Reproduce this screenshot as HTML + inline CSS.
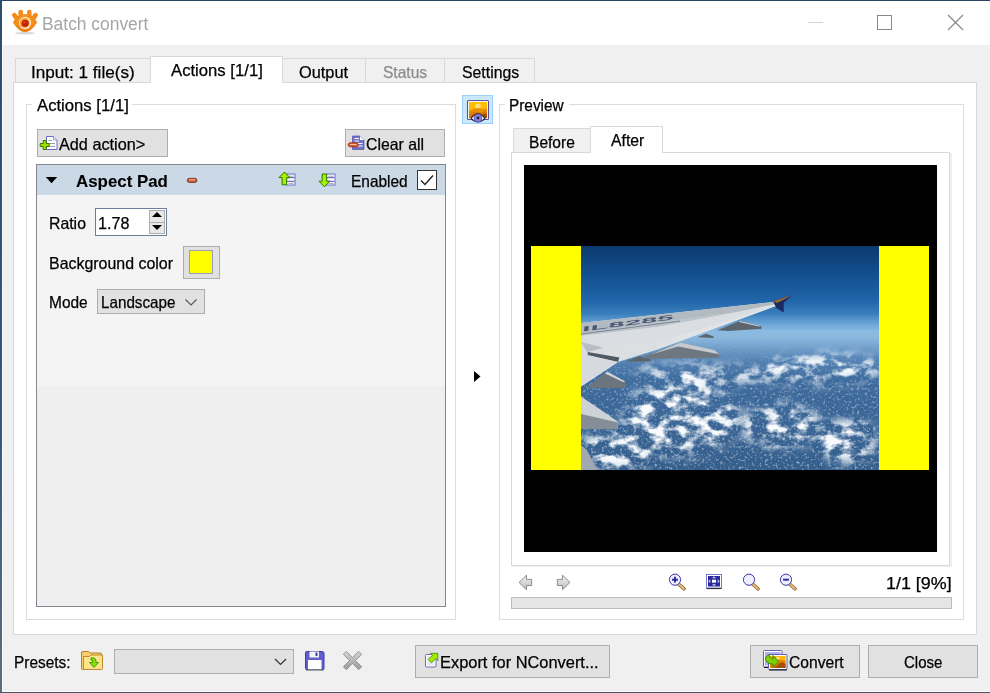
<!DOCTYPE html>
<html><head><meta charset="utf-8">
<style>
*{margin:0;padding:0;box-sizing:border-box}
html,body{width:990px;height:693px;overflow:hidden;background:#f0f0f0;font-family:"Liberation Sans",sans-serif;font-size:16px;color:#000}
.a{position:absolute}
.t{position:absolute;white-space:pre;line-height:1;transform-origin:0 0;-webkit-text-stroke:0.25px currentColor}
.btn{position:absolute;background:#e1e1e1;border:1px solid #adadad}
.tab{position:absolute;background:#f0f0f0;border:1px solid #d9d9d9;border-bottom:none}
.tabon{position:absolute;background:#fff;border:1px solid #d9d9d9;border-bottom:none}
.box{position:absolute;border:1px solid #dcdcdc}
</style></head><body>
<!-- window frame -->
<div class="a" style="left:0;top:0;width:990px;height:693px;background:#f0f0f0"></div>
<div class="a" style="left:0;top:0;width:990px;height:45px;background:#fff"></div>
<div class="a" style="left:0;top:0;width:990px;height:1px;background:#2a4560"></div>
<div class="a" style="left:0;top:0;width:2px;height:693px;background:linear-gradient(#2d4d6c,#34597c 60%,#5a6e80)"></div>
<div class="a" style="left:2px;top:45px;width:1px;height:647px;background:#fafafa"></div>
<div class="a" style="left:2px;top:691px;width:988px;height:1px;background:#fafafa"></div>
<div class="a" style="left:0;top:692px;width:990px;height:1px;background:#4a5664"></div>

<!-- title -->
<div class="a" style="left:808px;top:22px;width:15px;height:1px;background:#d4d4d4"></div>
<div class="a" style="left:877px;top:15px;width:15px;height:15px;border:1px solid #888"></div>
<svg class="a" style="left:947px;top:14px" width="17" height="17"><path d="M1 1L16 16M16 1L1 16" stroke="#888" stroke-width="1.2"/></svg>

<!-- main tabs -->
<div class="a" style="left:13px;top:82px;width:964px;height:553px;background:#fff;border:1px solid #d9d9d9"></div>
<div class="tab" style="left:15px;top:58px;width:136px;height:24px"></div>
<div class="tabon" style="left:150px;top:56px;width:133px;height:27px"></div>
<div class="tab" style="left:282px;top:58px;width:84px;height:24px"></div>
<div class="tab" style="left:365px;top:58px;width:80px;height:24px"></div>
<div class="tab" style="left:444px;top:58px;width:91px;height:24px"></div>

<!-- left group -->
<div class="box" style="left:26px;top:104px;width:430px;height:516px"></div>
<div class="a" style="left:32px;top:96px;width:100px;height:16px;background:#fff"></div>

<div class="btn" style="left:37px;top:129px;width:131px;height:28px"></div>
<div class="btn" style="left:345px;top:129px;width:100px;height:28px"></div>

<div class="a" style="left:36px;top:164px;width:410px;height:443px;border:1px solid #828790;background:#efefef"></div>
<div class="a" style="left:37px;top:165px;width:408px;height:30px;background:#cbd9e7"></div>
<div class="a" style="left:37px;top:195px;width:408px;height:191px;background:#f4f4f4"></div>
<svg class="a" style="left:45px;top:176px" width="13" height="9"><path d="M0.8 1H12.2L6.5 7.3z" fill="#000"/></svg>

<div class="a" style="left:417px;top:170px;width:20px;height:20px;border:1px solid #333;background:#fff"></div>
<svg class="a" style="left:417px;top:170px" width="20" height="20"><path d="M4 10.5L8 14.5L16 5.5" fill="none" stroke="#222" stroke-width="1.4"/></svg>

<div class="a" style="left:95px;top:208px;width:72px;height:28px;border:1px solid #6a8098;background:#fff"></div>
<div class="a" style="left:149px;top:210px;width:16px;height:24px;border:1px solid #adadad;background:#e8e8e8"></div>
<div class="a" style="left:150px;top:222px;width:14px;height:1px;background:#adadad"></div>
<svg class="a" style="left:151px;top:211px" width="12" height="21"><path d="M1 6L6 1L11 6Z" fill="#000"/><path d="M1 14H11L6 19Z" fill="#000"/></svg>
<div class="btn" style="left:183px;top:246px;width:37px;height:33px"></div>
<div class="a" style="left:189px;top:250px;width:24px;height:24px;border:1px solid #9c9cb8;background:#ffff00"></div>
<div class="btn" style="left:97px;top:289px;width:108px;height:25px"></div>
<svg class="a" style="left:184px;top:298px" width="14" height="9"><path d="M1.5 1.5L7 7L12.5 1.5" fill="none" stroke="#555" stroke-width="1.1"/></svg>

<!-- middle -->
<div class="a" style="left:462px;top:95px;width:31px;height:29px;background:#cce8ff;border:1px solid #99d1ff"></div>
<svg class="a" style="left:474px;top:371px" width="7" height="12"><path d="M0 0L6.5 5.5L0 11z" fill="#000"/></svg>

<!-- preview group -->
<div class="box" style="left:499px;top:104px;width:465px;height:516px"></div>
<div class="a" style="left:505px;top:96px;width:64px;height:16px;background:#fff"></div>
<div class="a" style="left:511px;top:152px;width:439px;height:414px;border:1px solid #d9d9d9;background:#fff"></div>
<div class="a" style="left:950px;top:153px;width:2px;height:414px;background:#f0f0f0"></div>
<div class="a" style="left:512px;top:566px;width:440px;height:1px;background:#f0f0f0"></div>
<div class="tab" style="left:513px;top:128px;width:78px;height:24px"></div>
<div class="tabon" style="left:590px;top:126px;width:73px;height:27px"></div>
<div class="a" style="left:524px;top:165px;width:413px;height:387px;background:#000"></div>
<div class="a" style="left:531px;top:246px;width:398px;height:224px;background:#ff0"></div>
<svg id="photo" class="a" style="left:581px;top:246px" width="298" height="224" viewBox="0 0 298 224">
 <defs>
  <linearGradient id="sky" x1="0" y1="0" x2="0" y2="1">
   <stop offset="0" stop-color="#0c3a6e"/>
   <stop offset=".3" stop-color="#134f8e"/>
   <stop offset=".6" stop-color="#2166aa"/>
   <stop offset=".82" stop-color="#4a8cc8"/>
   <stop offset="1" stop-color="#86b6de"/>
  </linearGradient>
  <linearGradient id="gnd" x1="0" y1="0" x2="0" y2="1">
   <stop offset="0" stop-color="#8cb6dc"/>
   <stop offset=".14" stop-color="#5f8fc0"/>
   <stop offset=".35" stop-color="#3f6c9e"/>
   <stop offset="1" stop-color="#345e8c"/>
  </linearGradient>
  <linearGradient id="upper" x1="0" y1="0" x2="1" y2="0.4">
   <stop offset="0" stop-color="#d4d8dc"/>
   <stop offset="1" stop-color="#e8eaec"/>
  </linearGradient>
  <filter id="fine" x="0" y="0" width="100%" height="100%">
   <feTurbulence type="fractalNoise" baseFrequency="0.38" numOctaves="3" seed="5"/>
   <feColorMatrix type="matrix" values="0 0 0 0 0.9  0 0 0 0 0.94  0 0 0 0 0.97  3.2 0 0 0 -1.75"/><feGaussianBlur stdDeviation=".7"/>
  </filter>
  <filter id="cloud" x="0" y="0" width="100%" height="100%">
   <feTurbulence type="fractalNoise" baseFrequency="0.07 0.1" numOctaves="4" seed="11"/>
   <feColorMatrix type="matrix" values="0 0 0 0 0.95  0 0 0 0 0.97  0 0 0 0 0.99  4 0 0 0 -1.7"/><feGaussianBlur stdDeviation=".6"/>
  </filter>
  <filter id="bl" x="-30%" y="-30%" width="160%" height="160%"><feGaussianBlur stdDeviation="6"/></filter>
  <linearGradient id="mf" x1="0" y1="0" x2="0" y2="1"><stop offset="0" stop-color="#000"/><stop offset=".15" stop-color="#333"/><stop offset=".4" stop-color="#ccc"/><stop offset="1" stop-color="#fff"/></linearGradient>
  <mask id="mfine"><rect y="84" width="298" height="140" fill="url(#mf)"/></mask>
  <mask id="mcl"><g fill="#fff" filter="url(#bl)">
   <ellipse cx="240" cy="122" rx="62" ry="15"/>
   <ellipse cx="200" cy="180" rx="40" ry="22"/>
   <ellipse cx="265" cy="195" rx="30" ry="22"/>
   <ellipse cx="100" cy="172" rx="58" ry="38"/>
   <ellipse cx="140" cy="130" rx="70" ry="7"/>
   <ellipse cx="35" cy="205" rx="40" ry="20"/>
   <ellipse cx="110" cy="125" rx="60" ry="6"/>
  </g></mask>
  <linearGradient id="haze" x1="0" y1="0" x2="0" y2="1"><stop offset="0" stop-color="#8ab8e0" stop-opacity="0"/><stop offset=".38" stop-color="#8cbce2" stop-opacity=".8"/><stop offset=".5" stop-color="#92bee2" stop-opacity=".7"/><stop offset="1" stop-color="#80aad4" stop-opacity="0"/></linearGradient>
 </defs>
 <rect width="298" height="92" fill="url(#sky)"/>
 <rect y="84" width="298" height="140" fill="url(#gnd)"/>
 <rect y="84" width="298" height="140" filter="url(#fine)" mask="url(#mfine)" opacity=".6"/>
 <rect y="84" width="298" height="140" filter="url(#cloud)" mask="url(#mcl)"/>
 <rect x="0" y="68" width="298" height="46" fill="url(#haze)"/>
 <!-- wing body -->
 <path d="M0 77L192.8 56L198.5 57.4L198.5 58.8L78 103L37 116L0 140.6Z" fill="url(#upper)"/>
 <path d="M0 77L192.8 56L198.5 57.4L150 67L0 87Z" fill="#b2bac2"/>
 <path d="M0 87L150 67L198 58.6L78 80.7L0 90Z" fill="#bcc3c9"/>
 <g transform="translate(1 85.5) rotate(-7.5) skewX(-15) scale(1.85 0.42)" fill="#26365a" opacity=".75"><text x="0" y="0" font-family="Liberation Sans" font-weight="bold" font-size="16">IL8285</text></g>
 <path d="M0 88L99 75" stroke="#5a6a80" stroke-width="1" opacity=".7"/>
 <path d="M0 90L78 80.7L198 58.8L78 96L22.5 101.7Z" fill="#dadee2"/>
 <path d="M0 96L22.5 101.7L6 106Z" fill="#b8bec4"/>
 <path d="M22.5 101.7L78 95.9L78 103L28.3 114.6Z" fill="#dcdfe2"/>
 <path d="M6.7 106L38.4 111.5L37 116L6.7 109Z" fill="#505a64"/>
 <path d="M0 108L37 116L0 140.6Z" fill="#d6dade"/>
 <!-- fairings -->
 <path d="M136.2 84.3L158.9 75.1L180 80L180.8 82.8L147.5 85Z" fill="#5c646c"/>
 <path d="M158.9 75.1L180 80L178 80.5L158 76Z" fill="#c8cdd2"/>
 <path d="M116.4 91.3L124.9 87.8L132.7 90.6L132.7 92Z" fill="#5c646c"/>
 <path d="M63 110.5L99.5 96.5L133.4 104L138.3 108.3L137.6 111.8L68 112.8Z" fill="#6e7780"/>
 <path d="M99.5 96.5L133.4 104L138.3 108.3L97 100.5L70 108.5Z" fill="#c4cacf"/>
 <path d="M45.6 115.4L58 110.3L70.2 113.4L69 115.4Z" fill="#5c646c"/>
 <path d="M6.7 140.6L26.2 125.5L44.2 135.6L45.6 140.6L41.3 142L6.7 142Z" fill="#6c757e"/>
 <path d="M26.2 125.5L44.2 135.6L42 136L24 127.5Z" fill="#cfd4d8"/>
 <path d="M0 150.6L18.2 162.7L37.4 175.9L36.3 182.9L0 183Z" fill="#cdd2d6"/>
 <path d="M0 168L37 176.5L36.3 182.9L0 183Z" fill="#858e96"/>
 <path d="M0 199L6 204L16 224L0 224Z" fill="#a0a8b0"/>
 <!-- winglet -->
 <path d="M192 55.3L211.2 48.9L202.7 56.7L202.7 66.6L195.6 62.3Z" fill="#1a2a62"/>
 <path d="M192 55.3L211.2 48.9L203 53.5L196 57Z" fill="#9a6a30"/>
</svg>

<div class="a" style="left:511px;top:597px;width:441px;height:12px;background:#e6e6e6;border:1px solid #bcbcbc"></div>

<!-- bottom -->
<div class="btn" style="left:114px;top:649px;width:180px;height:25px"></div>
<svg class="a" style="left:274px;top:658px" width="13" height="8"><path d="M1 1L6.5 6.5L12 1" fill="none" stroke="#333" stroke-width="1.2"/></svg>
<div class="btn" style="left:415px;top:645px;width:195px;height:33px"></div>
<div class="btn" style="left:750px;top:645px;width:110px;height:33px"></div>
<div class="btn" style="left:868px;top:645px;width:110px;height:33px"></div>

<!-- TEXTS -->
<div class="t" style="left:42.3px;top:15px;font-size:18px;color:#a6a6a6;-webkit-text-stroke:0;transform:scaleX(0.967)">Batch convert</div>
<div class="t" style="left:30.5px;top:64px;font-size:16.5px;transform:scaleX(1.037)">Input: 1 file(s)</div>
<div class="t" style="left:171.0px;top:62px;font-size:16.5px;transform:scaleX(1.011)">Actions [1/1]</div>
<div class="t" style="left:298.5px;top:64px;font-size:16.5px;transform:scaleX(0.990)">Output</div>
<div class="t" style="left:383.1px;top:64px;font-size:16.5px;color:#8c8c8c;transform:scaleX(0.942)">Status</div>
<div class="t" style="left:462.2px;top:64px;font-size:16.5px;transform:scaleX(0.960)">Settings</div>
<div class="t" style="left:37.0px;top:97px;font-size:16.5px;transform:scaleX(1.011)">Actions [1/1]</div>
<div class="t" style="left:58.7px;top:136px;font-size:16.5px;transform:scaleX(0.984)">Add action&gt;</div>
<div class="t" style="left:366.0px;top:136px;font-size:16.5px;transform:scaleX(0.960)">Clear all</div>
<div class="t" style="left:76.4px;top:173px;font-size:16.5px;font-weight:700;-webkit-text-stroke:0.1px #000;transform:scaleX(1.023)">Aspect Pad</div>
<div class="t" style="left:351.4px;top:173px;font-size:16.5px;transform:scaleX(0.936)">Enabled</div>
<div class="t" style="left:49.2px;top:215px;font-size:16.5px;transform:scaleX(0.959)">Ratio</div>
<div class="t" style="left:98.4px;top:215px;font-size:16.5px;transform:scaleX(0.977)">1.78</div>
<div class="t" style="left:49.1px;top:255px;font-size:16.5px;transform:scaleX(0.966)">Background color</div>
<div class="t" style="left:49.1px;top:294px;font-size:16.5px;transform:scaleX(0.938)">Mode</div>
<div class="t" style="left:100.9px;top:294px;font-size:16.5px;transform:scaleX(0.922)">Landscape</div>
<div class="t" style="left:508.7px;top:97px;font-size:16.5px;transform:scaleX(0.931)">Preview</div>
<div class="t" style="left:528.6px;top:134px;font-size:16.5px;transform:scaleX(0.943)">Before</div>
<div class="t" style="left:611.0px;top:132px;font-size:16.5px;transform:scaleX(0.957)">After</div>
<div class="t" style="left:886.1px;top:575px;font-size:16.5px;transform:scaleX(1.085)">1/1 [9%]</div>
<div class="t" style="left:14.3px;top:654px;font-size:16.5px;transform:scaleX(0.934)">Presets:</div>
<div class="t" style="left:440.0px;top:654px;font-size:16.5px;transform:scaleX(0.994)">Export for NConvert...</div>
<div class="t" style="left:789.0px;top:654px;font-size:16.5px;transform:scaleX(0.947)">Convert</div>
<div class="t" style="left:903.8px;top:654px;font-size:16.5px;transform:scaleX(0.910)">Close</div>
<!-- ICONS -->
<svg class="a" style="left:12px;top:8px" width="27" height="27" viewBox="0 0 27 27">
 <defs><radialGradient id="lg1" cx="50%" cy="35%" r="65%"><stop offset="0" stop-color="#ffa830"/><stop offset="1" stop-color="#ea7a10"/></radialGradient>
 <radialGradient id="lg2" cx="40%" cy="40%" r="60%"><stop offset="0" stop-color="#e03818"/><stop offset="1" stop-color="#b81400"/></radialGradient>
 <radialGradient id="lg3" cx="45%" cy="45%" r="55%"><stop offset="0" stop-color="#ffd050"/><stop offset="1" stop-color="#f08a10"/></radialGradient></defs>
 <ellipse cx="13" cy="25.2" rx="10" ry="1.2" fill="#bdbdbd" opacity=".6"/>
 <path d="M1 14.5Q3.5 9 7 7.5Q10 6 13 6Q16 6 19 7.5Q22.5 9 25 14.5Q22 20 18 22.5Q15.5 24 13 24Q10.5 24 8 22.5Q4 20 1 14.5Z" fill="url(#lg1)"/>
 <rect x="6.4" y="1.8" width="4.6" height="8" rx="2.3" fill="#f48c1a"/>
 <rect x="15" y="1.8" width="4.6" height="8" rx="2.3" fill="#f48c1a"/>
 <rect x="1.2" y="4.6" width="4.6" height="8" rx="2.3" transform="rotate(-40 3.5 8.6)" fill="#f28a18"/>
 <rect x="20.2" y="4.6" width="4.6" height="8" rx="2.3" transform="rotate(40 22.5 8.6)" fill="#f28a18"/>
 <circle cx="13" cy="15" r="6" fill="#fff"/>
 <circle cx="12.7" cy="15" r="5.1" fill="url(#lg3)"/>
 <circle cx="13" cy="15.2" r="3.5" fill="url(#lg2)"/>
</svg>

<svg class="a" style="left:39px;top:135px" width="19" height="17" viewBox="0 0 19 17">
 <path d="M7.5 1.5H14.5L18 5V14.5H7.5Z" fill="#fff" stroke="#6c6cc8" stroke-width="1"/>
 <path d="M14.5 1.5V5H18" fill="#e8e8f8" stroke="#8a8ad0" stroke-width=".8"/>
 <path d="M9.5 5.5H13M9.5 8.5H16M9.5 11.5H16" stroke="#9090a8" stroke-width=".9"/>
 <path d="M4.2 5.5H7.2V8.5H10.2V11.5H7.2V14.5H4.2V11.5H1.2V8.5H4.2Z" fill="#9ee000" stroke="#3a7a00" stroke-width="1"/>
</svg>

<svg class="a" style="left:347px;top:135px" width="18" height="16" viewBox="0 0 18 16">
 <path d="M5.5 1H13L17 5V14.5H5.5Z" fill="#7272c4" stroke="#5a5ab0" stroke-width=".8"/>
 <path d="M13 1V5H17Z" fill="#fff"/>
 <path d="M7.5 3.5H12M7.5 6H12M7.5 8.5H15.5M7.5 11H15.5" stroke="#fff" stroke-width="1.2"/>
 <rect x="1.2" y="7.8" width="10" height="4" rx="2" fill="#e06030" stroke="#a02a10" stroke-width=".9"/>
 <path d="M3 9.5H9.5" stroke="#ffc0a0" stroke-width="1"/>
</svg>

<svg class="a" style="left:186px;top:177px" width="12" height="7" viewBox="0 0 12 7"><rect x="1.3" y="1.3" width="9.6" height="4.2" rx="2" fill="#c85a3a" stroke="#6a2010" stroke-width=".7"/><path d="M3 2.9H9" stroke="#ffb8a0" stroke-width="1"/></svg>

<svg class="a" style="left:278px;top:171px" width="18" height="15" viewBox="0 0 18 15">
 <rect x="8.5" y="3" width="8.5" height="11" fill="#fff" stroke="#6c6cc8" stroke-width="1"/>
 <path d="M9 6.7H16.5M9 10.3H16.5" stroke="#7070c8" stroke-width="1.2"/>
 <path d="M10.3 5.2H15.5M10.3 12.3H15.5" stroke="#999" stroke-width=".9"/>
 <path d="M6.4 1L11.8 6.6H8.7V13.8H4.1V6.6H1Z" fill="#a8f000" stroke="#2e7a00" stroke-width="1" stroke-linejoin="round"/>
</svg>
<svg class="a" style="left:318px;top:171px" width="18" height="17" viewBox="0 0 18 17">
 <rect x="8.5" y="3" width="8.5" height="11" fill="#fff" stroke="#6c6cc8" stroke-width="1"/>
 <path d="M9 6.7H16.5M9 10.3H16.5" stroke="#7070c8" stroke-width="1.2"/>
 <path d="M10.3 5.2H15.5M10.3 12.3H15.5" stroke="#999" stroke-width=".9"/>
 <path d="M4.1 3H8.7V10.2H11.8L6.4 15.8L1 10.2H4.1Z" fill="#a8f000" stroke="#2e7a00" stroke-width="1" stroke-linejoin="round"/>
</svg>

<svg class="a" style="left:466px;top:99px" width="24" height="25" viewBox="0 0 24 25">
 <rect x="1.5" y="1.5" width="21" height="19" rx="1" fill="#fff" stroke="#5a509a" stroke-width="1.1"/>
 <rect x="3" y="3" width="18" height="16" fill="#ffbc00"/>
 <circle cx="12" cy="7.3" r="2.8" fill="#ffe080"/>
 <path d="M3 11.5L9 9.5L13 9L17 10L21 9.5V19H3Z" fill="#e89000"/>
 <path d="M3 15L9 12.5L15 13.5L19 12L21 13V19H3Z" fill="#d87800"/>
 <path d="M15 19L18 14.5L21 15V19Z" fill="#a85000"/>
 <path d="M5 19.3Q12 10.5 19 19.3Q12 26.5 5 19.3Z" fill="#fff" stroke="#222" stroke-width="1.1"/>
 <circle cx="12" cy="19" r="3.9" fill="#8a84e8" stroke="#4a44b0" stroke-width=".7"/>
 <circle cx="12" cy="19" r="1.4" fill="#222"/>
</svg>

<svg class="a" style="left:518px;top:574px" width="15" height="17" viewBox="0 0 15 17">
 <defs><linearGradient id="ng" x1="0" y1="0" x2="0" y2="1"><stop offset="0" stop-color="#f2f2f2"/><stop offset="1" stop-color="#bdbdbd"/></linearGradient></defs>
 <path d="M1 8.4L8.5 1.2V5.4H13.7V11.5H8.5V15.7Z" fill="url(#ng)" stroke="#8c8c8c" stroke-width="1" stroke-linejoin="round"/>
</svg>
<svg class="a" style="left:556px;top:574px" width="15" height="17" viewBox="0 0 15 17">
 <path d="M14 8.4L6.5 1.2V5.4H1.3V11.5H6.5V15.7Z" fill="url(#ng)" stroke="#8c8c8c" stroke-width="1" stroke-linejoin="round"/>
</svg>

<svg class="a" style="left:667px;top:572px" width="20" height="19" viewBox="0 0 20 19">
 <path d="M11.5 12L17 16.8" stroke="#8a5a20" stroke-width="3.4" stroke-linecap="round"/>
 <path d="M11.5 12L17 16.8" stroke="#e8c080" stroke-width="1.8" stroke-linecap="round"/>
 <circle cx="8" cy="7.7" r="5.6" fill="#eeeeff" stroke="#3a3aa8" stroke-width="1"/>
 <path d="M8 4.8V10.6M5.1 7.7H10.9" stroke="#2a2a90" stroke-width="1.9"/>
</svg>
<svg class="a" style="left:705px;top:573px" width="18" height="17" viewBox="0 0 18 17">
 <rect x="1.5" y="1.5" width="15" height="13.5" fill="#fff" stroke="#7878d0" stroke-width="1"/>
 <rect x="3" y="3" width="12" height="10.5" fill="#2a2a98"/>
 <path d="M1.5 15.6H16.5" stroke="#222" stroke-width="1"/>
 <path d="M9 3.3L11 5.3H7ZM9 13.2L11 11.2H7ZM3.3 8.2L5.3 6.2V10.2ZM14.7 8.2L12.7 6.2V10.2Z" fill="#c8c8f8"/>
 <rect x="7" y="6.7" width="4" height="3" fill="#fff"/>
</svg>
<svg class="a" style="left:741px;top:572px" width="20" height="19" viewBox="0 0 20 19">
 <path d="M11.5 12L17 16.8" stroke="#8a5a20" stroke-width="3.4" stroke-linecap="round"/>
 <path d="M11.5 12L17 16.8" stroke="#e8c080" stroke-width="1.8" stroke-linecap="round"/>
 <circle cx="8" cy="7.7" r="5.6" fill="#eeeeff" stroke="#3a3aa8" stroke-width="1"/>
</svg>
<svg class="a" style="left:778px;top:572px" width="20" height="19" viewBox="0 0 20 19">
 <path d="M11.5 12L17 16.8" stroke="#8a5a20" stroke-width="3.4" stroke-linecap="round"/>
 <path d="M11.5 12L17 16.8" stroke="#e8c080" stroke-width="1.8" stroke-linecap="round"/>
 <circle cx="8" cy="7.7" r="5.6" fill="#eeeeff" stroke="#3a3aa8" stroke-width="1"/>
 <path d="M5.1 7.7H10.9" stroke="#2a2a90" stroke-width="1.9"/>
</svg>

<svg class="a" style="left:80px;top:650px" width="24" height="21" viewBox="0 0 24 21">
 <path d="M1.5 3Q1.5 1.5 3 1.5H8.5L10 3H20.5Q21.5 3 21.5 4V18.5Q21.5 19.5 20.5 19.5H2.5Q1.5 19.5 1.5 18.5Z" fill="#f6d070" stroke="#b88020" stroke-width="1"/>
 <path d="M3.5 6.5H9.5L11 5H22.5V18.5Q22.5 19.5 21.5 19.5H3.5Z" fill="#fde48c" stroke="#c08a30" stroke-width="1"/>
 <path d="M11 8Q16.5 7 16 12.5H18.5L14 17.5L9.5 12.5H12.5Q13 10 11 10Z" fill="#8cdc10" stroke="#2c9a00" stroke-width=".9"/>
</svg>
<svg class="a" style="left:304px;top:650px" width="22" height="22" viewBox="0 0 22 22">
 <path d="M1.5 2.5Q1.5 1.5 2.5 1.5H18Q20 1.5 20 3.5V18.5Q20 19.5 19 19.5H2.5Q1.5 19.5 1.5 18.5Z" fill="#6060d0" stroke="#3a3aa8" stroke-width="1"/>
 <rect x="5.5" y="1.5" width="9.5" height="6" fill="#f4f4f4"/>
 <rect x="11.5" y="2.5" width="2" height="3.5" fill="#3a3aa0"/>
 <rect x="4" y="10" width="13.5" height="9.5" fill="#fff"/>
 <path d="M2 20H19.5" stroke="#555" stroke-width="1"/>
</svg>
<svg class="a" style="left:342px;top:650px" width="22" height="22" viewBox="0 0 22 22">
 <defs><linearGradient id="xg" x1="0" y1="0" x2="0" y2="1"><stop offset="0" stop-color="#d4d4d4"/><stop offset="1" stop-color="#9a9a9a"/></linearGradient></defs>
 <path d="M4.3 1.3L10.5 7.5L16.7 1.3L19.7 4.3L13.5 10.5L19.7 16.7L16.7 19.7L10.5 13.5L4.3 19.7L1.3 16.7L7.5 10.5L1.3 4.3Z" fill="url(#xg)" stroke="#8a8a8a" stroke-width=".8" stroke-linejoin="round"/>
</svg>

<svg class="a" style="left:424px;top:652px" width="16" height="16" viewBox="0 0 16 16">
 <rect x="1.5" y="2.5" width="10.5" height="12.5" rx="1" fill="#fff" stroke="#6a6ac0" stroke-width="1"/>
 <rect x="3" y="4" width="7.5" height="9.5" fill="#e6e8ec"/>
 <path d="M13.8 1.3V8.5L11.8 6.5L7.5 10.8L4.2 7.5L8.5 3.2L6.5 1.3Z" fill="#a4e800" stroke="#3a8a00" stroke-width=".8" stroke-linejoin="round"/>
</svg>

<svg class="a" style="left:762px;top:649px" width="26" height="22" viewBox="0 0 26 22">
 <rect x="1.5" y="1.5" width="18.5" height="16.5" rx="1" fill="#fff" stroke="#6060a8" stroke-width="1"/>
 <rect x="3" y="3" width="15.5" height="13.5" fill="#b0b0f0"/>
 <path d="M2 18.5H6" stroke="#111" stroke-width="1"/>
 <rect x="6.5" y="5.5" width="18.5" height="15" rx="1" fill="#fff" stroke="#6060a8" stroke-width="1"/>
 <rect x="8" y="7" width="15.5" height="12" fill="#ffb800"/>
 <circle cx="16" cy="9.8" r="2.2" fill="#ffd870"/>
 <path d="M8 14L13 11L17 10.5L23.5 11.5V19H8Z" fill="#e48400"/>
 <path d="M12 19L17 14.5L20 13L23.5 15V19Z" fill="#a85000"/>
 <path d="M7 21H25" stroke="#111" stroke-width="1"/>
 <path d="M3.5 11Q3.5 6 7.5 5.5V8Q10 9 10.5 10H11V6.5L16.5 12.5L11 18.5V15Q6 15.5 3.5 11Z" fill="#7cd000" stroke="#2a7a00" stroke-width=".8" stroke-linejoin="round"/>
</svg>
</body></html>
